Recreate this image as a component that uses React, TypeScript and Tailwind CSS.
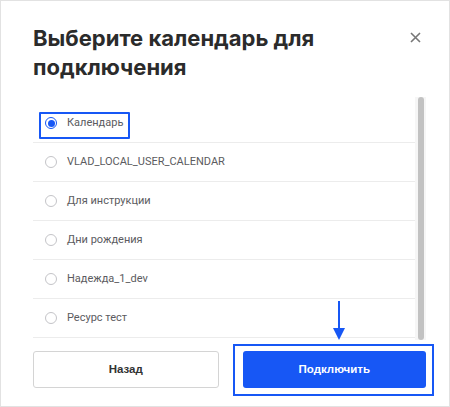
import { useState } from "react";

const calendars = [
  "Календарь",
  "VLAD_LOCAL_USER_CALENDAR",
  "Для инструкции",
  "Дни рождения",
  "Надежда_1_dev",
  "Ресурс тест",
];

function Radio({ checked }: { checked: boolean }) {
  if (checked) {
    return (
      <span className="flex h-[12px] w-[12px] shrink-0 items-center justify-center rounded-full border border-[#1757f5]">
        <span className="h-[7px] w-[7px] rounded-full bg-[#1757f5]" />
      </span>
    );
  }
  return <span className="h-[12px] w-[12px] shrink-0 rounded-full border border-[#c4c4c8]" />;
}

export default function App() {
  const [selected, setSelected] = useState(0);

  return (
    <div
      className="relative h-[407px] w-[450px] overflow-hidden border border-[#e2e2e2] bg-white"
      style={{ fontFamily: "Inter, 'Noto Sans', sans-serif" }}
    >
      {/* header */}
      <div className="flex items-start justify-between pl-[32px] pr-[28px] pt-[23px]">
        <h2 className="w-[330px] text-[22px] font-bold leading-[29px] text-[#2b2b2b]">
          Выберите календарь для подключения
        </h2>
        <button className="mt-[8px] text-[#777]">
          <svg width="11" height="11" viewBox="0 0 11 11">
            <path d="M1 1L10 10M10 1L1 10" stroke="currentColor" strokeWidth="1.6" />
          </svg>
        </button>
      </div>

      {/* list */}
      <div className="ml-[32px] mr-[23px] mt-[15px] flex h-[243px]">
        <div className="flex-1 pt-[7px]">
          {calendars.map((name, i) => (
            <div
              key={name}
              onClick={() => setSelected(i)}
              className="relative flex h-[39px] cursor-pointer items-center gap-[10px] border-b border-[#ececec] pl-[12px]"
            >
              <Radio checked={selected === i} />
              <span className="font-['Roboto',sans-serif] text-[11px] text-[#5b5b60]">{name}</span>
              {i === 0 && (
                <span className="absolute left-[6px] top-[8px] h-[27px] w-[91px] rounded-[1px] border-2 border-[#1757f5]" />
              )}
            </div>
          ))}
        </div>
        <div className="flex w-[11px] justify-center bg-[#f6f6f6]">
          <div className="h-full w-[6px] rounded-full bg-[#c2c2c2]" />
        </div>
      </div>

      {/* buttons */}
      <div className="ml-[32px] mr-[23px] mt-[11px] flex gap-[24px]">
        <button className="h-[37px] flex-1 rounded-[3px] border border-[#d4d4d4] bg-white font-['Liberation_Sans',sans-serif] text-[11.5px] font-bold text-[#333]">
          Назад
        </button>
        <button className="h-[37px] flex-1 rounded-[3px] bg-[#1757f5] font-['Liberation_Sans',sans-serif] text-[11.5px] font-bold text-white">
          Подключить
        </button>
      </div>

      {/* annotation */}
      <div className="absolute left-[232px] top-[343px] h-[52px] w-[201px] border-2 border-[#1757f5]" />
      <svg className="absolute left-[331px] top-[300px]" width="14" height="40" viewBox="0 0 14 40">
        <path d="M7 0V30" stroke="#1757f5" strokeWidth="2" />
        <path d="M1 27H13L7 39Z" fill="#1757f5" />
      </svg>
    </div>
  );
}
